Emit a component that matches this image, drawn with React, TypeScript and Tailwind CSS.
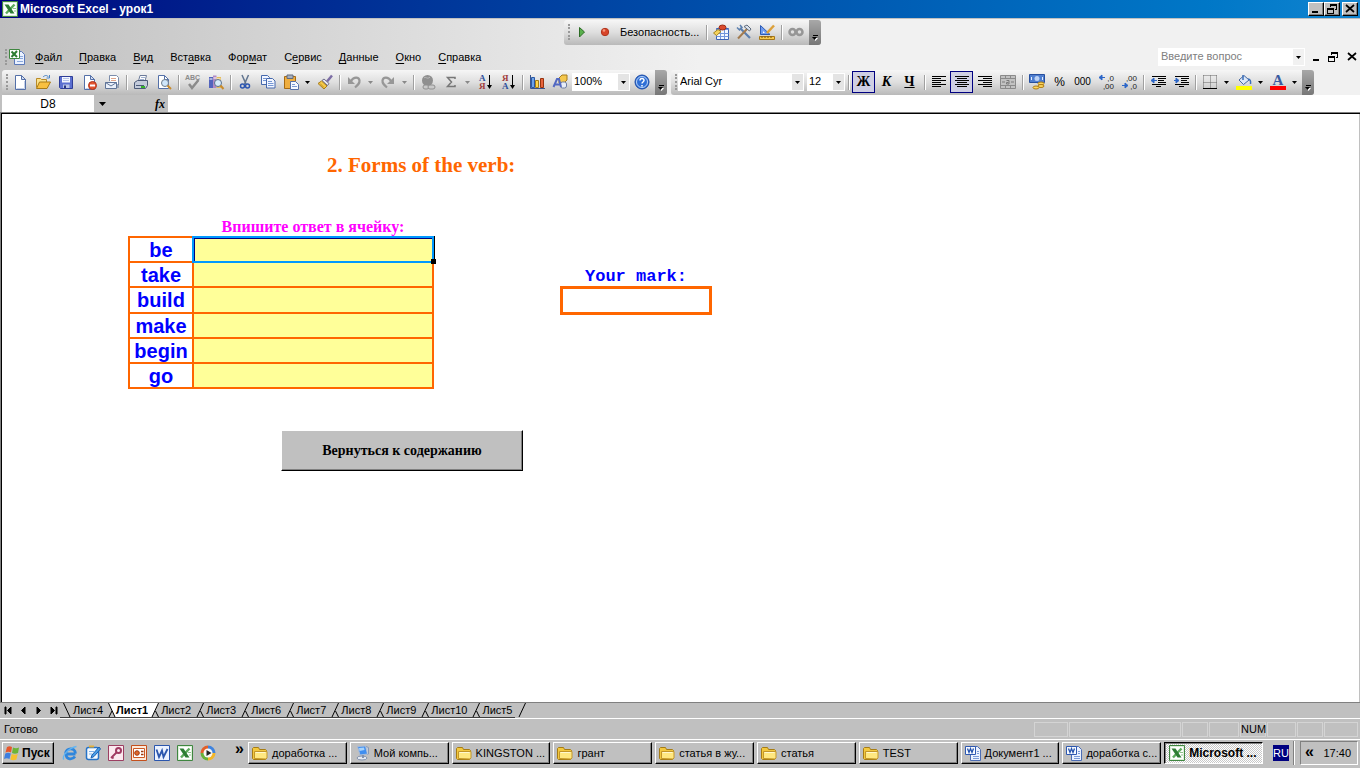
import type { ReactNode } from "react";
import clsx from "clsx";

const ui = "font-['Liberation_Sans',Arial,sans-serif]";
const raised =
  "border border-t-white border-l-white border-r-black border-b-black shadow-[inset_-1px_-1px_0_#808080] bg-[#c0c0c0]";

/* ---------- icons, all on a 16x16 grid ---------- */

function Icon({ children, size = 16 }: { children: ReactNode; size?: number }) {
  return (
    <svg width={size} height={size} viewBox="0 0 16 16" fill="none" className="shrink-0 overflow-visible" aria-hidden="true">
      {children}
    </svg>
  );
}

const PageShape = () => (
  <>
    <path d="M3.5 1.5h6l4 4v10h-10z" fill="#fff" stroke="#5470a8" />
    <path d="M12.5 7v7.5h-8" stroke="#c3cfe8" />
    <path d="M9.5 1.5v4h4z" fill="#d5def2" stroke="#5470a8" />
  </>
);

const NewIcon = () => <Icon><PageShape /></Icon>;

const OpenIcon = () => (
  <Icon>
    <path d="M1.5 13.5v-9h4l1 1h5v3" fill="#fbe28b" stroke="#b98a26" />
    <path d="M1.5 14.5l3-6.5h11l-3.5 6.5z" fill="#f9c040" stroke="#a97a16" />
    <path d="M8 3c2-2 4-2 5.5 0M14.5 1v3h-3" stroke="#4a83c4" />
  </Icon>
);

const SaveIcon = () => (
  <Icon>
    <path d="M1.5 2.5h13v12h-12l-1-1z" fill="#5b6fd0" stroke="#2f3e98" />
    <path d="M4 3h8v5.5H4z" fill="#f4f7ff" />
    <path d="M5 10.500h6.500V14H5z" fill="#b9c4e6" />
    <path d="M6 11.500h2V14H6z" fill="#26347f" />
    <path d="M5 4.500h6M5 6.500h6" stroke="#b5c2e8" />
  </Icon>
);

const PermissionIcon = () => (
  <Icon>
    <PageShape />
    <circle cx="11.5" cy="11.5" r="4" fill="#e2532f" stroke="#b2361c" />
    <path d="M9 11.5h5" stroke="#fff" strokeWidth="2" />
  </Icon>
);

const MailIcon = () => (
  <Icon>
    <path d="M5.5 7V1.5h7l2 2V11" fill="#fff" stroke="#7b8cab" />
    <path d="M7 4.500h5M7 6.500h5" stroke="#e0a58a" />
    <path d="M1.500 8.500h11v6h-11z" fill="#eaf0fa" stroke="#5f7498" />
    <path d="M1.500 8.500L7 12l5.500-3.500" stroke="#5f7498" />
    <path d="M14 10v4" stroke="#5f7498" />
  </Icon>
);

const PrintIcon = () => (
  <Icon>
    <path d="M5.5 7l1.5-5.5h6.5L12 7z" fill="#fff" stroke="#6c7b9a" />
    <path d="M1.5 8.5l3-2h10v5l-2 3h-11z" fill="#c3cbdb" stroke="#4c5a78" />
    <path d="M3 11.5h8" stroke="#4c5a78" />
    <path d="M8 13h4" stroke="#35b22c" strokeWidth="2" />
    <path d="M8 3.5h4M7 5.5h4" stroke="#a0b0cf" />
  </Icon>
);

const PreviewIcon = () => (
  <Icon>
    <path d="M2.5 1.5h6l4 4v9h-10z" fill="#fff" stroke="#5470a8" />
    <path d="M8.5 1.5v4h4" stroke="#5470a8" />
    <circle cx="9" cy="9" r="3.5" fill="#cfe6fa" stroke="#6d7c8c" />
    <path d="M11.5 11.5l3.5 3.5" stroke="#c98b2b" strokeWidth="2" />
  </Icon>
);

const SpellIcon = () => (
  <Icon>
    <text x="0" y="6" fontSize="7" fontWeight="bold" fill="#8b8b8b">ABC</text>
    <path d="M4 10l3 4 6.5-8" stroke="#8b8b8b" strokeWidth="2.5" />
  </Icon>
);

const ResearchIcon = () => (
  <Icon>
    <path d="M1 3h4v11H1z" fill="#5364bd" />
    <path d="M5 1.5h3.5V14H5z" fill="#b18ac4" />
    <path d="M8.5 3H13v11H8.5z" fill="#e6bd5b" />
    <path d="M1.5 5h3M5.5 4h3M9 5h3.5" stroke="#fff" />
    <circle cx="10" cy="9" r="3.5" fill="#d7ecfb" stroke="#59708d" />
    <path d="M12.5 11.5L15.5 15" stroke="#c98b2b" strokeWidth="2" />
  </Icon>
);

const CutIcon = () => (
  <Icon>
    <path d="M5 1l4 9M11.5 1l-4 9" stroke="#61758f" strokeWidth="1.5" />
    <circle cx="5.5" cy="12" r="2" stroke="#2b55b0" strokeWidth="1.5" />
    <circle cx="10.5" cy="12" r="2" stroke="#2b55b0" strokeWidth="1.5" />
  </Icon>
);

const CopyIcon = () => (
  <Icon>
    <path d="M1.5 1.5h6l2 2v7h-8z" fill="#f2f6ff" stroke="#4669ad" />
    <path d="M6.5 4.5h6l2.500 2.500v7H6.500z" fill="#f2f6ff" stroke="#4669ad" />
    <path d="M8 7.500h4M8 9.500h5.500M8 11.500h5.500M3 4.500h3M3 6.500h3" stroke="#7596d4" />
  </Icon>
);

const PasteIcon = () => (
  <Icon>
    <path d="M1.5 2.5h11v12h-11z" fill="#efae3f" stroke="#a66a13" />
    <path d="M4 1h6v3.5H4z" fill="#a7afbd" stroke="#606a7c" />
    <path d="M7.5 7.5h5l3 3v5h-8z" fill="#f5f8ff" stroke="#5570a8" />
    <path d="M9 10.500h3M9 12.500h5" stroke="#7b99d2" />
  </Icon>
);

const BrushIcon = () => (
  <Icon>
    <path d="M15 1.5l-5 6" stroke="#7c6da5" strokeWidth="2.5" />
    <path d="M7 5l5 4.5-1.5 2L5 6.5z" fill="#e8e8f2" stroke="#6d6c8a" />
    <path d="M4.5 7l5.5 5-3 3-6-5.5z" fill="#f5cb4b" stroke="#a97c1c" />
    <path d="M3 9.5l4 4" stroke="#bf8d22" />
  </Icon>
);

const UndoIcon = ({ flip = false }: { flip?: boolean }) => (
  <Icon>
    <g transform={flip ? "matrix(-1 0 0 1 16 0)" : undefined}>
      <path d="M5 7c3-5 8-4 8.5-.5.3 3-1.5 4.500-4.500 7" stroke="#979797" strokeWidth="2.2" />
      <path d="M2 3v7h7z" fill="#979797" />
    </g>
  </Icon>
);

const LinkIcon = () => (
  <Icon>
    <circle cx="7.5" cy="6.5" r="5.5" fill="#8f8f8f" />
    <path d="M4 4c2-2 3 2 6-1" stroke="#bcbcbc" />
    <rect x="3" y="11" width="6" height="4" rx="2" fill="#c9c9c9" stroke="#8f8f8f" />
    <rect x="8" y="11" width="7" height="4" rx="2" fill="#c9c9c9" stroke="#8f8f8f" />
  </Icon>
);

const SumIcon = () => (
  <Icon>
    <path d="M12 5V3.500H4.500L8.500 8l-4 4.500H12V11" stroke="#777" strokeWidth="1.500" />
  </Icon>
);

const SortIcon = ({ top, bottom, topColor, bottomColor }: { top: string; bottom: string; topColor: string; bottomColor: string }) => (
  <Icon>
    <g fontSize="9" fontWeight="bold" fontFamily="Liberation Serif, serif">
      <text x="2" y="7" fill={topColor}>{top}</text>
      <text x="2" y="15" fill={bottomColor}>{bottom}</text>
    </g>
    <path d="M12.5 1v11" stroke="#000" />
    <path d="M10 11h5l-2.5 4z" fill="#000" />
  </Icon>
);

const ChartIcon = () => (
  <Icon>
    <path d="M1.5 1v13.5H16" stroke="#38558f" />
    <path d="M2.500 3.500h3v10h-3z" fill="#6da2e8" stroke="#2a59a5" />
    <path d="M6.500 6.500h3v7h-3z" fill="#ffd64c" stroke="#a67d14" />
    <path d="M11.500 4.500h3v9h-3z" fill="#e8643c" stroke="#97330f" />
  </Icon>
);

const DrawingIcon = () => (
  <Icon>
    <path d="M7 4l3-3h5v5l-3 3H7z" fill="#f5c84e" stroke="#a57b1c" />
    <rect x="8.5" y="8" width="6" height="6" rx="2" fill="#e8edf7" stroke="#6d7da3" />
    <path d="M1.5 13L5 5h2l2 8M3 10.500h5" stroke="#5369c2" strokeWidth="2" />
  </Icon>
);

const HelpIcon = () => (
  <Icon>
    <circle cx="8" cy="8" r="7" fill="#2f6fd6" stroke="#1c4ba5" />
    <circle cx="8" cy="8" r="5.5" stroke="#b8d3f8" />
    <path d="M6 6.500c0-3 4.200-2.500 4 0-.2 1.500-2 1.500-2 3M8 11v1.500" stroke="#fff" strokeWidth="1.500" />
  </Icon>
);

const LinesIcon = ({ rows }: { rows: [number, number][] }) => (
  <Icon>
    {rows.map(([from, to], i) => (
      <path key={i} d={`M${from} ${2.5 + i * 2}H${to}`} stroke="#000" />
    ))}
  </Icon>
);

const MergeIcon = () => (
  <Icon>
    <path d="M.5 1.500h15v13H.5zM.5 4.500h15M.5 11.500h15M5.500 1.500v3M10.500 1.500v3M5.500 11.500v3M10.500 11.500v3" fill="#c2c2c2" stroke="#8a8a8a" />
    <path d="M2 8h3M11 8h3M6.500 6.500h2.500v3.500h-2.500V8.500h2" stroke="#7a7a7a" />
  </Icon>
);

const CurrencyIcon = () => (
  <Icon>
    <path d="M.5.5h15v8H.5z" fill="#4f7ed0" stroke="#274f9d" />
    <circle cx="8" cy="4.500" r="2.500" fill="#bcd2f4" />
    <path d="M2.500 3v3M13.500 3v3" stroke="#e3edfb" />
    <ellipse cx="12" cy="9.500" rx="3" ry="1.500" fill="#fdd65b" stroke="#ad7c15" />
    <ellipse cx="12" cy="12" rx="3" ry="1.500" fill="#fdd65b" stroke="#ad7c15" />
    <ellipse cx="7" cy="13.500" rx="3" ry="1.500" fill="#fdd65b" stroke="#ad7c15" />
  </Icon>
);

const DecimalIcon = ({ more = false }: { more?: boolean }) => (
  <Icon>
    <g fontSize="8" fill="#222" textAnchor="end">
      <text x="16" y="7">{more ? ",0" : ",00"}</text>
      <text x="16" y="15">{more ? ",00" : ",0"}</text>
    </g>
    {more ? (
      <path d="M7 3.500H2M4 1L1 3.500 4 6z" stroke="#2d67c8" fill="#2d67c8" />
    ) : (
      <path d="M1 11.500h5M4 9l3 2.500L4 14z" stroke="#2d67c8" fill="#2d67c8" />
    )}
  </Icon>
);

const IndentIcon = ({ right = false }: { right?: boolean }) => (
  <Icon>
    <path d="M2 2.500h14M8 4.500h8M8 6.500h6M8 8.500h8M2 10.500h14M6 12.500h5" stroke="#000" />
    {right ? (
      <path d="M1 6.500h3M3 4l3 2.500L3 9z" stroke="#2d67c8" fill="#2d67c8" />
    ) : (
      <path d="M3 6.500h4M4 4L1 6.500 4 9z" stroke="#2d67c8" fill="#2d67c8" />
    )}
  </Icon>
);

const BordersIcon = () => (
  <Icon>
    <path d="M1.500 1.500h13M1.500 8.500h13M1.500 1.500v13M8.500 1.500v13M14.500 1.500v13" stroke="#666" strokeDasharray="1 1" />
    <path d="M1 14.500h14" stroke="#000" />
  </Icon>
);

const FillIcon = () => (
  <Icon>
    <path d="M3 6l5-4.500 5 4.500-5.500 4.500z" fill="#dce7f7" stroke="#47679f" />
    <path d="M7 6V1M12 5c2 0 3 2 2.500 5" stroke="#3c70b9" strokeWidth="1.500" />
    <path d="M0 12h16v4H0z" fill="#ff0" />
  </Icon>
);

const FontColorIcon = () => (
  <Icon>
    <text x="8" y="11" fontSize="15" fontWeight="bold" fontFamily="Liberation Serif, serif" textAnchor="middle" fill="#3a5ba0">A</text>
    <path d="M0 12h16v4H0z" fill="#f00" />
  </Icon>
);

const PlayIcon = () => (
  <Icon>
    <path d="M5.500 3.500l5 4.500-5 5z" fill="#59b04c" stroke="#2c6b25" />
  </Icon>
);

const RecordIcon = () => (
  <Icon>
    <circle cx="8" cy="8" r="3.700" fill="#d8452a" stroke="#b0351d" />
    <circle cx="7" cy="6.500" r="1.300" fill="#f59a80" />
  </Icon>
);

const VisualBasicIcon = () => (
  <Icon>
    <path d="M3.500 4.500h12v11h-12z" fill="#f3f7ff" stroke="#3c62b4" />
    <path d="M3.500 5.500h12M3.500 9.500h12M3.500 12.500h12M7.500 6v9M11.500 6v9" stroke="#7295db" />
    <ellipse cx="9.500" cy="3.500" rx="3.500" ry="2.500" fill="#db4a2c" stroke="#9d2d15" />
    <path d="M.5 9L5 5.500l3 2-4.500 4z" fill="#f6d35c" stroke="#a8861f" />
  </Icon>
);

const ToolsIcon = () => (
  <Icon>
    <path d="M4 4l10 10" stroke="#5c7fae" strokeWidth="2.200" />
    <path d="M1 3.500L3.500 6 6 3.500 4 1" stroke="#5c7fae" strokeWidth="1.500" />
    <path d="M11 5l-9 9.500" stroke="#a37b4f" strokeWidth="2" />
    <path d="M8 2.500l3-1.500 4 4-1.500 2z" fill="#dbe2ec" stroke="#5f6b7d" />
  </Icon>
);

const DesignIcon = () => (
  <Icon>
    <path d="M1.500 1.500l9.500 9H1.500z" fill="#6f9bef" stroke="#2c5bb5" />
    <path d="M4 7v2h2z" fill="#fff" />
    <path d="M15 1.500L8 9" stroke="#dca03a" strokeWidth="2.500" />
    <path d="M.5 12.500h15v3H.5z" fill="#f8c94d" stroke="#a5761a" />
    <path d="M3 12.500V14M6 12.500V14M9 12.500V14M12 12.500V14" stroke="#6f4b08" />
  </Icon>
);

const ScriptIcon = () => (
  <Icon>
    <circle cx="4.500" cy="8" r="3" stroke="#969696" strokeWidth="2.500" />
    <circle cx="11.500" cy="8" r="3" stroke="#969696" strokeWidth="2.500" />
  </Icon>
);

const ExcelMark = () => (
  <Icon>
    <path d="M.5.5h15v15H.5z" fill="#dcefd8" stroke="#3f8640" />
    <path d="M2 2h12v12H2z" fill="#fff" />
    <path d="M12.500 3.500L4 12.500" stroke="#5dab5c" strokeWidth="2.500" />
    <path d="M2.500 3.500H6.500L12.500 12.500H8.500z" fill="#2d7d33" />
    <path d="M11 7.500h3M12 10h2" stroke="#8fc08c" />
  </Icon>
);

const WorkbookIcon = () => (
  <Icon>
    <path d="M5.500 2.500h7l3 3v10h-10z" fill="#eaf1ff" stroke="#5b79b9" />
    <path d="M11 7.500h3M11 9.500h3M8 12.500h6" stroke="#8ba9dc" />
    <path d="M.5.5h10v9H.5z" fill="#fff" stroke="#3f8640" />
    <path d="M2.500 2.500l5.500 5.500M8 2L2.500 8" stroke="#2d7d33" strokeWidth="2" />
  </Icon>
);

const WordDocIcon = () => (
  <Icon>
    <path d="M5.500 1.500h7l3 3v11h-10z" fill="#eaf1ff" stroke="#4b6cb4" />
    <path d="M12 6.500h2M12 8.500h2M8 11.500h6M8 13.500h6" stroke="#7b9bd8" />
    <path d="M.5 1.500h10v8H.5z" fill="#f8fbff" stroke="#2e58b0" />
    <path d="M2.500 3.500l1.500 4 1.500-4 1.500 4 1.500-4" stroke="#2452ae" strokeWidth="1.300" />
  </Icon>
);

const FolderIcon = () => (
  <Icon>
    <path d="M.5 13.500V3.500l1-1h5l1 2h6l1 1v8l-1 1h-12z" fill="#f3c83e" stroke="#a67c14" />
    <path d="M2.500 13.500v-7h12.500v6.500l-1 1z" fill="#ffe880" stroke="#c2962a" />
    <path d="M3.500 7.500h10" stroke="#fff8cf" />
  </Icon>
);

const ComputerIcon = () => (
  <Icon>
    <path d="M3.500 1.500l8-.5 2 8-7.500 1z" fill="#3f8ef0" stroke="#a9bcd8" />
    <path d="M5 3l5-.5.5 2.500-5 1z" fill="#a8d3fb" />
    <path d="M12 1.500l2.500 1V9l-1 .5" fill="#c5cddb" stroke="#8a9ab5" />
    <ellipse cx="8" cy="13" rx="5" ry="2" fill="#e4e9f1" stroke="#8292ae" />
    <path d="M9 10v3" stroke="#8292ae" strokeWidth="2" />
  </Icon>
);

const WindowsFlag = () => (
  <Icon>
    <path d="M3 2c2-1 3-1 5 0L7 7.500c-2-1-3-1-5.500 0z" fill="#e8562b" />
    <path d="M9 2.500c2 1 4 1 6 0L14 8c-2 1-4 1-6 0z" fill="#6cb536" />
    <path d="M1.300 8.500c2-1 3.500-1 5.500 0L5.500 14c-2-1-3.500-1-5.500 0z" fill="#3d7fe0" />
    <path d="M7.700 9c2 1 4 1 6 0l-1.300 5.500c-2 1-4 1-6 0z" fill="#f6c12e" />
  </Icon>
);

const ExplorerIcon = () => (
  <Icon>
    <path d="M13.500 9H4.500M4 9c0 6 6.500 6 9 2.500M3.500 8.500c.5-6 9.500-6.500 10 0" stroke="#2f86dc" strokeWidth="2.800" />
    <path d="M2 14.500C-1 12 6 3 14.500 1.500" stroke="#62b5f2" strokeWidth="1.300" />
  </Icon>
);

const OutlookIcon = () => (
  <Icon>
    <rect x="1.500" y="2.500" width="12" height="12" rx="2" fill="#f5faff" stroke="#2673c8" strokeWidth="1.500" />
    <path d="M4 6.500h5M4 9h3" stroke="#7eb0e6" />
    <path d="M14 2L7 10l-1 3 3-1.500L15.500 4z" fill="#4aa0ea" stroke="#1d5fae" />
    <path d="M4 1.500h5" stroke="#e5b13b" strokeWidth="2" />
  </Icon>
);

const AccessIcon = () => (
  <Icon>
    <path d="M.5.5h15v15H.5z" fill="#fbe9ef" stroke="#9c3f62" />
    <circle cx="10.500" cy="5.500" r="2.500" stroke="#a03a62" strokeWidth="2" />
    <path d="M8.500 7.500L3 13M4 12l1.500 1.500" stroke="#a03a62" strokeWidth="1.800" />
  </Icon>
);

const PowerPointIcon = () => (
  <Icon>
    <path d="M.5.5h15v15H.5z" fill="#fdeadb" stroke="#c4501d" />
    <path d="M2.500 3.500h11v9h-11z" fill="#fff" stroke="#cc5a25" />
    <circle cx="6" cy="8" r="2.300" fill="#e06a2d" stroke="#9e3b10" />
    <path d="M10 6.500h2.500M10 9.500h2.500" stroke="#9e3b10" strokeWidth="1.500" />
  </Icon>
);

const WordIcon = () => (
  <Icon>
    <path d="M.5.5h15v15H.5z" fill="#ebf2ff" stroke="#2b56ad" />
    <path d="M2.500 4.500L5 12l3-6.500 1.500 6.500 4-8" stroke="#2b56ad" strokeWidth="1.800" />
  </Icon>
);

const MediaIcon = () => (
  <Icon>
    <path d="M8 .5A7.500 7.500 0 00.5 8H8z" fill="#e2602a" />
    <path d="M8 .5A7.500 7.500 0 0115.500 8H8z" fill="#3f83de" />
    <path d="M.5 8A7.500 7.500 0 008 15.500V8z" fill="#69b13a" />
    <path d="M15.500 8A7.500 7.500 0 018 15.500V8z" fill="#f2b62a" />
    <circle cx="8" cy="8" r="4.500" fill="#f7f7f7" />
    <path d="M6.500 5l5 3-5 3z" fill="#222" />
  </Icon>
);

/* ---------- toolbar parts ---------- */

function Toolbar({ label, children }: { label: string; children: ReactNode }) {
  return (
    <div
      role="toolbar"
      aria-label={label}
      className="flex h-[25px] shrink-0 items-center rounded-[3px] bg-linear-to-b from-[#f6f6f6] via-[#dedede] to-[#b9b9b9] pb-px"
    >
      <span className="ml-1 h-4 border-l-2 border-dotted border-[#999]" />
      {children}
      <button
        aria-label="Параметры панели"
        className="ml-[2px] flex h-[25px] w-3 flex-col items-center justify-end self-start rounded-r-[3px] bg-linear-to-b from-[#a8a8a8] to-[#777] pb-1"
      >
        <span className="mb-px h-px w-[5px] bg-black" />
        <svg width="6" height="4" viewBox="0 0 6 4" aria-hidden="true">
          <path d="M1 1h5L3.500 4z" fill="#fff" />
          <path d="M0 0h5L2.500 3z" fill="#000" />
        </svg>
      </button>
    </div>
  );
}

function Tool({ label, on = false, children }: { label: string; on?: boolean; children: ReactNode }) {
  return (
    <button
      aria-label={label}
      className={clsx("flex h-[22px] w-[23px] shrink-0 items-center justify-center", on && "border border-[#000080] bg-[#cfcfe4]")}
    >
      {children}
    </button>
  );
}

const Sep = () => (
  <span className="flex w-[6px] shrink-0 justify-center">
    <span className="h-[15px] w-px bg-[#a0a0a0] shadow-[1px_0_0_#fff]" />
  </span>
);

function Caret({ dim = false }: { dim?: boolean }) {
  return (
    <svg width="5" height="3" viewBox="0 0 5 3" aria-hidden="true" className="shrink-0">
      <path d="M0 0h5L2.500 3z" fill={dim ? "#888" : "#000"} />
    </svg>
  );
}

const Drop = ({ label, dim }: { label: string; dim?: boolean }) => (
  <button aria-label={label} className="flex h-[22px] w-[11px] shrink-0 items-center justify-center">
    <Caret dim={dim} />
  </button>
);

function Combo({ label, value, width }: { label: string; value: string; width: string }) {
  return (
    <div className={clsx("relative h-[18px] shrink-0 bg-white", width)}>
      <select
        aria-label={label}
        className="block h-4 w-full appearance-none py-0 pl-[2px] pr-3 text-[11px] leading-[16px] outline-none"
      >
        <option>{value}</option>
      </select>
      <span className="pointer-events-none absolute inset-y-px right-px flex w-[11px] items-center justify-center bg-[#e4e4e4]">
        <Caret />
      </span>
    </div>
  );
}

/* ---------- window chrome ---------- */

const Minimize = () => <path d="M1 7h6v2H1z" fill="#000" />;
const Restore = () => (
  <path d="M3 0h7v6H8V5h1V2H4v1H3zM0 4h7v6H0zM1 6v3h5V6z" fill="#000" fillRule="evenodd" />
);
const Close = () => <path d="M1 1l8 7M9 1L1 8" stroke="#000" strokeWidth="1.700" />;

function WinButton({ label, flat = false, children }: { label: string; flat?: boolean; children: ReactNode }) {
  return (
    <button aria-label={label} className={clsx("flex h-[14px] w-4 items-center justify-center", !flat && raised)}>
      <svg width="10" height="10" viewBox="0 0 10 10" aria-hidden="true">{children}</svg>
    </button>
  );
}

function TitleBar() {
  return (
    <header className="flex h-[18px] shrink-0 items-center bg-linear-to-r from-[#000080] to-[#1084d0] px-[2px]">
      <ExcelMark />
      <h1 className="ml-[2px] flex-1 text-[12px] font-bold leading-[16px] text-white">Microsoft Excel - урок1</h1>
      <WinButton label="Свернуть"><Minimize /></WinButton>
      <WinButton label="Восстановить"><Restore /></WinButton>
      <span className="w-[2px]" />
      <WinButton label="Закрыть"><Close /></WinButton>
    </header>
  );
}

// [before, accelerator, after]
const menus = [
  ["", "Ф", "айл"],
  ["", "П", "равка"],
  ["", "В", "ид"],
  ["Вст", "а", "вка"],
  ["Фор", "м", "ат"],
  ["С", "е", "рвис"],
  ["", "Д", "анные"],
  ["", "О", "кно"],
  ["", "С", "правка"],
];

function MenuBar() {
  return (
    <div className="flex h-6 items-center pb-[2px]">
      <span className="ml-[5px] mr-[2px] h-4 border-l-2 border-dotted border-[#999]" />
      <WorkbookIcon />
      <nav className="ml-[10px] flex flex-1 gap-[17px]">
        {menus.map(([a, key, b]) => (
          <button key={a + key + b} className="text-[11px] leading-[16px]">
            {a}<span className="underline underline-offset-2">{key}</span>{b}
          </button>
        ))}
      </nav>
      <div className="relative mr-1 h-[18px] w-[147px] bg-white">
        <input
          aria-label="Введите вопрос"
          placeholder="Введите вопрос"
          className="block h-4 w-full px-[3px] text-[11px] leading-[16px] outline-none placeholder:text-[#808080]"
        />
        <span className="absolute inset-y-px right-px flex w-[11px] items-center justify-center bg-[#f1f1f1]">
          <Caret />
        </span>
      </div>
      <WinButton flat label="Свернуть книгу"><Minimize /></WinButton>
      <WinButton flat label="Восстановить книгу"><Restore /></WinButton>
      <span className="w-[3px]" />
      <WinButton flat label="Закрыть книгу"><Close /></WinButton>
    </div>
  );
}

function Toolbars() {
  return (
    <div className="flex gap-1 pl-[2px]">
      <Toolbar label="Стандартная">
        <Tool label="Создать"><NewIcon /></Tool>
        <Tool label="Открыть"><OpenIcon /></Tool>
        <Tool label="Сохранить"><SaveIcon /></Tool>
        <Tool label="Разрешения"><PermissionIcon /></Tool>
        <Tool label="Сообщение"><MailIcon /></Tool>
        <Sep />
        <Tool label="Печать"><PrintIcon /></Tool>
        <Tool label="Просмотр"><PreviewIcon /></Tool>
        <Sep />
        <Tool label="Орфография"><SpellIcon /></Tool>
        <Tool label="Справочные материалы"><ResearchIcon /></Tool>
        <Sep />
        <Tool label="Вырезать"><CutIcon /></Tool>
        <Tool label="Копировать"><CopyIcon /></Tool>
        <Tool label="Вставить"><PasteIcon /></Tool>
        <Drop label="Параметры вставки" />
        <Tool label="Формат по образцу"><BrushIcon /></Tool>
        <Sep />
        <Tool label="Отменить"><UndoIcon /></Tool>
        <Drop label="Список отмены" dim />
        <Tool label="Вернуть"><UndoIcon flip /></Tool>
        <Drop label="Список возврата" dim />
        <Sep />
        <Tool label="Гиперссылка"><LinkIcon /></Tool>
        <Tool label="Автосумма"><SumIcon /></Tool>
        <Drop label="Функции" dim />
        <Tool label="Сортировка по возрастанию">
          <SortIcon top="А" bottom="Я" topColor="#2c4f9c" bottomColor="#a03a3a" />
        </Tool>
        <Tool label="Сортировка по убыванию">
          <SortIcon top="Я" bottom="А" topColor="#a03a3a" bottomColor="#2c4f9c" />
        </Tool>
        <Sep />
        <Tool label="Мастер диаграмм"><ChartIcon /></Tool>
        <Tool label="Рисование"><DrawingIcon /></Tool>
        <span className="w-px" />
        <Combo label="Масштаб" value="100%" width="w-[58px]" />
        <Tool label="Справка"><HelpIcon /></Tool>
      </Toolbar>

      <Toolbar label="Форматирование">
        <span className="w-px" />
        <Combo label="Шрифт" value="Arial Cyr" width="w-[126px]" />
        <span className="w-[3px]" />
        <Combo label="Размер" value="12" width="w-[38px]" />
        <Sep />
        <span className="w-px" />
        <Tool label="Полужирный" on>
          <span className="font-['Liberation_Serif',serif] text-[14px] font-bold leading-[16px]">Ж</span>
        </Tool>
        <Tool label="Курсив">
          <span className="font-['Liberation_Serif',serif] text-[14px] font-bold italic leading-[16px]">К</span>
        </Tool>
        <Tool label="Подчеркнутый">
          <span className="font-['Liberation_Serif',serif] text-[14px] font-bold leading-[16px] underline">Ч</span>
        </Tool>
        <Sep />
        <Tool label="По левому краю">
          <LinesIcon rows={[[1, 15], [1, 10], [1, 15], [1, 10], [1, 15], [1, 10]]} />
        </Tool>
        <Tool label="По центру" on>
          <LinesIcon rows={[[1, 15], [3, 13], [1, 15], [3, 13], [1, 15], [3, 13]]} />
        </Tool>
        <Tool label="По правому краю">
          <LinesIcon rows={[[1, 15], [6, 15], [1, 15], [6, 15], [1, 15], [6, 15]]} />
        </Tool>
        <Tool label="Объединить"><MergeIcon /></Tool>
        <Sep />
        <Tool label="Денежный формат"><CurrencyIcon /></Tool>
        <Tool label="Процентный формат"><span className="text-[12px] leading-[16px]">%</span></Tool>
        <Tool label="Формат с разделителями"><span className="text-[10px] leading-[16px]">000</span></Tool>
        <Tool label="Увеличить разрядность"><DecimalIcon more /></Tool>
        <Tool label="Уменьшить разрядность"><DecimalIcon /></Tool>
        <Sep />
        <Tool label="Уменьшить отступ"><IndentIcon /></Tool>
        <Tool label="Увеличить отступ"><IndentIcon right /></Tool>
        <Sep />
        <Tool label="Границы"><BordersIcon /></Tool>
        <Drop label="Виды границ" />
        <Tool label="Цвет заливки"><FillIcon /></Tool>
        <Drop label="Цвета заливки" />
        <Tool label="Цвет шрифта"><FontColorIcon /></Tool>
        <Drop label="Цвета шрифта" />
      </Toolbar>
    </div>
  );
}

function FormulaBar() {
  return (
    <div className="flex h-[17px] items-stretch bg-[#c0c0c0] pl-[2px]">
      <input
        aria-label="Имя ячейки"
        defaultValue="D8"
        className="w-[92px] bg-white text-center text-[12px] leading-[16px] outline-none"
      />
      <button aria-label="Список имен" className="flex w-4 items-center justify-center">
        <svg width="7" height="4" viewBox="0 0 7 4" aria-hidden="true"><path d="M0 0h7L3.500 4z" fill="#000" /></svg>
      </button>
      <span className="flex-none basis-[42px]" />
      <button aria-label="Вставка функции" className="w-4 font-['Liberation_Serif',serif] text-[12px] font-bold italic leading-[16px]">
        fx
      </button>
      <input aria-label="Строка формул" className="min-w-0 flex-1 bg-white px-1 text-[12px] outline-none" />
    </div>
  );
}

/* ---------- sheet ---------- */

const verbs = ["be", "take", "build", "make", "begin", "go"];

function Sheet() {
  return (
    <main className="flex-1 overflow-hidden border-l border-t border-black bg-white shadow-[inset_-1px_0_0_#c0c0c0]">
      <h2 className="ml-[325px] mt-[39px] font-['Liberation_Serif',serif] text-[21px] font-bold leading-[24px] text-[#ff6600]">
        2. Forms of the verb:
      </h2>

      <div className="ml-[126px] mt-[41px] flex items-start">
        <div className="w-[306px]">
          <p className="ml-16 text-center font-['Liberation_Serif',serif] text-[16px] font-bold leading-[18px] text-[#ff00ff]">
            Впишите ответ в ячейку:
          </p>
          <div className="relative">
            <table className="w-full table-fixed border-collapse">
              <colgroup>
                <col className="w-16" />
                <col />
              </colgroup>
              <tbody>
                {verbs.map((verb) => (
                  <tr key={verb} className={verb === "build" ? "h-[26px]" : "h-[25px]"}>
                    <th scope="row" className="border-2 border-[#ff6600] p-0 text-[20px] font-bold leading-[22px] text-[#0000ff]">
                      {verb}
                    </th>
                    <td className="border-2 border-[#ff6600] bg-[#ffff99] p-0">
                      <input aria-label={`Формы глагола ${verb}`} className="block h-[22px] w-full px-1 outline-none" />
                    </td>
                  </tr>
                ))}
              </tbody>
            </table>
            {/* cell cursor */}
            <div className="pointer-events-none absolute left-16 right-0 top-0 h-[27px] border-2 border-[#0099ff] shadow-[1px_0_0_#000,inset_1px_1px_0_#000080]">
              <span className="absolute -bottom-[3px] -right-1 size-[5px] bg-black" />
            </div>
          </div>
        </div>

        <div className="ml-[126px] mt-[50px] flex w-[152px] flex-col">
          <label
            htmlFor="mark"
            className="text-center font-['Liberation_Mono',monospace] text-[17px] font-bold leading-[18px] text-[#0000ff]"
          >
            Your mark:
          </label>
          <input id="mark" className="h-[29px] border-3 border-[#ff6600] px-1 text-center outline-none" />
        </div>
      </div>

      <button
        className={clsx(
          "ml-[279px] mt-[41px] h-[41px] w-[242px] font-['Liberation_Serif',serif] text-[14px] font-bold leading-[16px]",
          raised,
        )}
      >
        Вернуться к содержанию
      </button>
    </main>
  );
}

const sheets = ["Лист4", "Лист1", "Лист2", "Лист3", "Лист6", "Лист7", "Лист8", "Лист9", "Лист10", "Лист5"];
const active = 1;

// slanted edge between two tabs
function TabEdge({ at }: { at: number }) {
  let lines = "M10.500 0L4 14M7.500 8l3 6";
  if (at === 0) lines = "M3.500 0L10 14";
  else if (at === active) lines = "M3.500 0L10 14M7 8l-3 6";
  else if (at === sheets.length) lines = "M10.500 0L4 14";
  return (
    <svg width="11" height="14" viewBox="0 0 11 14" className="shrink-0" aria-hidden="true">
      {at === active && <path d="M3.500 0H11v14h-1z" fill="#fff" />}
      {at === active + 1 && <path d="M0 0h10.500L4 14H0z" fill="#fff" />}
      <path d={lines} stroke="#000" fill="none" />
    </svg>
  );
}

const scrollers = [
  ["Первый лист", "M1 1h1v7H1zM7 1v7L3.500 4.500z"],
  ["Предыдущий лист", "M6 1v7L2.500 4.500z"],
  ["Следующий лист", "M3 1v7l3.500-3.500z"],
  ["Последний лист", "M7 1h1v7H7zM2 1v7l3.500-3.500z"],
];

function SheetTabs() {
  return (
    <div className="flex h-4 shrink-0 border-t border-[#808080] bg-[#c0c0c0]">
      {scrollers.map(([label, d]) => (
        <button key={label} aria-label={label} className="flex w-[15px] items-center justify-end pr-[2px]">
          <svg width="9" height="9" viewBox="0 0 9 9" aria-hidden="true">
            <path d={d} fill="#000" stroke="#000" strokeWidth="1" />
          </svg>
        </button>
      ))}
      <div className="flex h-[15px] border-b border-[#404040]">
        {sheets.map((name, i) => (
          <div key={name} className="flex">
            <TabEdge at={i} />
            <button className={clsx("text-[11px] leading-[14px]", i === active ? "bg-white font-bold" : "px-[2px]")}>
              {name}
            </button>
          </div>
        ))}
      </div>
      <TabEdge at={sheets.length} />
    </div>
  );
}

const cell = "h-[15px] border border-[#d4d4d4]";

function StatusBar() {
  return (
    <footer className="flex h-[21px] shrink-0 items-center gap-px border-t border-white bg-[#c0c0c0] pl-1 pr-[2px] text-[11px] leading-[13px]">
      <span className="flex-1">Готово</span>
      <span className={clsx(cell, "w-[34px]")} />
      <span className={clsx(cell, "w-[112px]")} />
      <span className={clsx(cell, "w-[26px]")} />
      <span className={clsx(cell, "w-[30px]")} />
      <span className={clsx(cell, "w-[26px] text-center")}>NUM</span>
      <span className={clsx(cell, "w-[29px]")} />
      <span className={clsx(cell, "w-[26px]")} />
      <span className={clsx(cell, "w-[34px]")} />
    </footer>
  );
}

/* ---------- taskbar ---------- */

const launchers: [string, ReactNode][] = [
  ["Internet Explorer", <ExplorerIcon />],
  ["Outlook Express", <OutlookIcon />],
  ["Access", <AccessIcon />],
  ["PowerPoint", <PowerPointIcon />],
  ["Word", <WordIcon />],
  ["Excel", <ExcelMark />],
  ["Windows Media", <MediaIcon />],
];

const tasks: [string, ReactNode][] = [
  ["доработка ...", <FolderIcon />],
  ["Мой компь...", <ComputerIcon />],
  ["KINGSTON ...", <FolderIcon />],
  ["грант", <FolderIcon />],
  ["статья в жу...", <FolderIcon />],
  ["статья", <FolderIcon />],
  ["TEST", <FolderIcon />],
  ["Документ1 ...", <WordDocIcon />],
  ["доработка с...", <WordDocIcon />],
];

function Taskbar() {
  return (
    <div className="flex h-[29px] shrink-0 items-center border-t border-white bg-[#c0c0c0] px-[2px] pb-[2px]">
      <button className={clsx("flex h-[22px] w-[52px] items-center gap-[2px] pl-px text-[12px] font-bold leading-[16px]", raised)}>
        <WindowsFlag />
        Пуск
      </button>
      <div className="ml-1 flex">
        {launchers.map(([name, icon]) => (
          <button key={name} aria-label={name} className="flex w-[23px] justify-center">{icon}</button>
        ))}
      </div>
      <button aria-label="Еще" className="w-[29px] pb-2 pl-3 text-[16px] font-bold leading-[14px]">»</button>
      <div className="grid flex-1 grid-cols-10 gap-[3px]">
        {tasks.map(([name, icon]) => (
          <button key={name} className={clsx("flex h-[22px] items-center gap-1 whitespace-nowrap pl-[3px] text-[11px] leading-[16px]", raised)}>
            {icon}
            {name}
          </button>
        ))}
        <button className="flex h-[22px] items-center gap-1 whitespace-nowrap border border-b-white border-l-black border-r-white border-t-black bg-[repeating-conic-gradient(#fff_0_25%,#c8c8c8_0_50%)] bg-[length:2px_2px] pl-1 text-[12px] font-bold leading-[16px] shadow-[inset_1px_1px_0_#808080]">
          <ExcelMark />
          Microsoft ...
        </button>
      </div>
      <button className="ml-[10px] size-4 bg-[#000080] text-[11px] leading-[16px] text-white">RU</button>
      <span className="ml-1 h-[24px] w-[2px] border-l border-r border-l-[#808080] border-r-white" />
      <div className="ml-[5px] flex h-[24px] w-[58px] items-center justify-between border border-b-white border-l-[#808080] border-r-white border-t-[#808080] pl-1 pr-[6px] leading-[16px]">
        <button aria-label="Скрытые значки" className="pb-[2px] text-[16px] font-bold">«</button>
        <time className="text-[11px]">17:40</time>
      </div>
    </div>
  );
}

export default function App() {
  return (
    <div className={clsx("flex h-screen flex-col overflow-hidden bg-[#c0c0c0] text-black", ui)}>
      <TitleBar />
      <div className="shrink-0 border-t border-[#c0c0c0] bg-[linear-gradient(to_right,#c0c0c0_0,#f1f1f1_700px)]">
        <div className="flex pb-px pl-[564px] pt-px">
          <Toolbar label="Visual Basic">
            <Tool label="Выполнить макрос"><PlayIcon /></Tool>
            <Tool label="Записать макрос"><RecordIcon /></Tool>
            <button className="px-1 text-[11px] leading-[16px]">Безопасность...</button>
            <Sep />
            <Tool label="Редактор Visual Basic"><VisualBasicIcon /></Tool>
            <Tool label="Элементы управления"><ToolsIcon /></Tool>
            <Tool label="Режим конструктора"><DesignIcon /></Tool>
            <Sep />
            <Tool label="Редактор сценариев"><ScriptIcon /></Tool>
          </Toolbar>
        </div>
        <MenuBar />
        <Toolbars />
        <FormulaBar />
      </div>
      <div className="flex min-h-0 flex-1 border-l border-t border-[#808080]">
        <Sheet />
      </div>
      <SheetTabs />
      <StatusBar />
      <Taskbar />
    </div>
  );
}
